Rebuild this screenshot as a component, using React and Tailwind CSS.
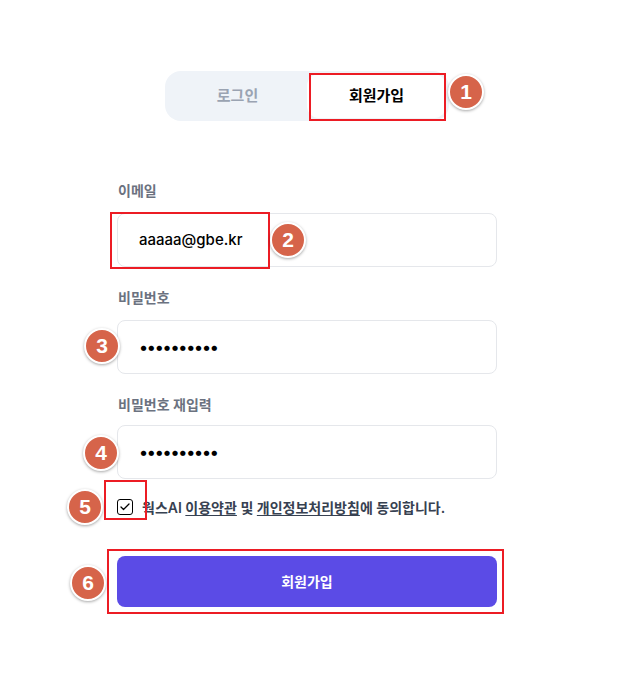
import { Check } from "lucide-react";

const font = { fontFamily: 'Inter, "Noto Sans CJK KR", sans-serif' };

function Badge({ n, className }) {
    return (
        <div
            className={
                "absolute flex h-[36px] w-[36px] items-center justify-center rounded-full border-2 border-white bg-[#d6644a] text-[21px] font-bold text-white shadow-[0_1px_3px_rgba(0,0,0,0.35)] " +
                className
            }
            style={{ fontFamily: '"Liberation Sans", Arial, sans-serif' }}>
            {n}
        </div>
    );
}

function Label({ children, className }) {
    return <div className={"pl-px text-[14px] font-semibold leading-5 text-[#6b7280] " + className}>{children}</div>;
}

function Field({ children }) {
    return (
        <div className="flex h-[54px] items-center rounded-lg border border-[#e5e7eb] bg-white pl-[21px] text-[15px] font-medium text-black">
            {children}
        </div>
    );
}

function Dots() {
    return <span className="text-[17px] leading-none tracking-[-1.2px]">••••••••••</span>;
}

export default function App() {
    return (
        <div className="min-h-[693px] w-[622px] bg-white" style={font}>
            {/* tabs */}
            <div className="pt-[71px] pl-[165px]">
                <div className="relative flex h-[50px] w-[284px] rounded-2xl bg-[#eff3f8] p-[3px]">
                    <div className="flex flex-1 items-center justify-center text-[15px] font-bold text-[#9aa3b2]">로그인</div>
                    <div className="flex flex-1 items-center justify-center rounded-xl bg-white text-[15px] font-bold text-black">
                        회원가입
                    </div>
                    <div className="absolute top-[2px] left-[144px] h-[48px] w-[137px] border-2 border-[#ec1c24]" />
                    <Badge n="1" className="top-[3px] left-[283px]" />
                </div>
            </div>

            {/* form */}
            <div className="w-[380px] pt-[60px] ml-[117px]">
                <Label>이메일</Label>
                <div className="relative mt-3">
                    <Field>aaaaa@gbe.kr</Field>
                    <div className="absolute -top-[1px] -left-[7px] h-[57px] w-[160px] border-2 border-[#ec1c24]" />
                    <Badge n="2" className="top-[9px] left-[153px]" />
                </div>

                <Label className="mt-[21px]">비밀번호</Label>
                <div className="relative mt-3">
                    <Field>
                        <Dots />
                    </Field>
                    <Badge n="3" className="top-[8px] -left-[33px]" />
                </div>

                <Label className="mt-[21px]">비밀번호 재입력</Label>
                <div className="relative mt-[10px]">
                    <Field>
                        <Dots />
                    </Field>
                    <Badge n="4" className="top-[10px] -left-[34px]" />
                </div>

                <div className="relative mt-[19px] flex h-[18px] items-center gap-[9px] text-[14px] font-semibold text-[#374151]">
                    <div className="flex h-[16px] w-[16px] shrink-0 items-center justify-center rounded-[3px] border-[1.5px] border-black">
                        <Check className="h-3 w-3 text-black" strokeWidth={2.5} />
                    </div>
                    <span className="whitespace-nowrap">
                        웍스AI <span className="underline underline-offset-2">이용약관</span> 및{" "}
                        <span className="underline underline-offset-2">개인정보처리방침</span>에 동의합니다.
                    </span>
                    <div className="absolute -top-[18px] -left-[13px] h-[40px] w-[43px] border-2 border-t-0 border-[#ec1c24]" />
                    <div className="absolute -top-[18px] -left-[13px] h-[2px] w-[43px] bg-[#ec1c24]" />
                    <Badge n="5" className="-top-[9px] -left-[50px]" />
                </div>

                <div className="relative mt-[40px]">
                    <button className="flex h-[51px] w-full items-center justify-center rounded-lg bg-[#5b4be6] text-[14px] font-bold text-white">
                        회원가입
                    </button>
                    <div className="absolute -top-[7px] -left-[10px] h-[65px] w-[397px] border-2 border-[#ec1c24]" />
                    <Badge n="6" className="top-[9px] -left-[47px]" />
                </div>
            </div>
        </div>
    );
}
